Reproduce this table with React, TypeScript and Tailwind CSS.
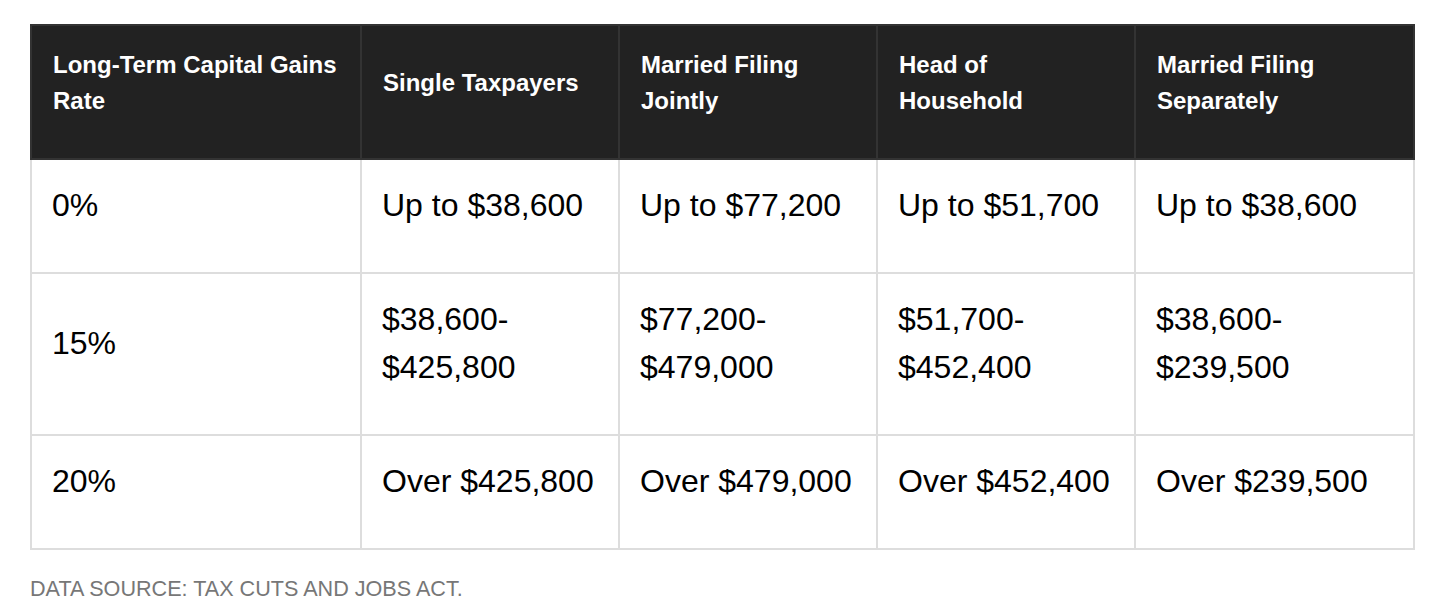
const headers = [
  "Long-Term Capital Gains Rate",
  "Single Taxpayers",
  "Married Filing Jointly",
  "Head of Household",
  "Married Filing Separately",
];

const rows = [
  ["0%", "Up to $38,600", "Up to $77,200", "Up to $51,700", "Up to $38,600"],
  ["15%", "$38,600-$425,800", "$77,200-$479,000", "$51,700-$452,400", "$38,600-$239,500"],
  ["20%", "Over $425,800", "Over $479,000", "Over $452,400", "Over $239,500"],
];

const widths = ["w-[330px]", "w-[258px]", "w-[258px]", "w-[258px]", "w-[279px]"];

function Cell({ text }: { text: string }) {
  // break ranges after the dash like the source
  if (text.includes("-$")) {
    const [a, b] = text.split("-");
    return (
      <>
        {a}-<br />
        {b}
      </>
    );
  }
  return <>{text}</>;
}

export default function App() {
  return (
    <div className="min-h-screen bg-white px-[30px] pt-[24px] font-['Liberation_Sans',Arial,sans-serif]">
      <table className="table-fixed border-collapse w-[1384px]">
        <colgroup>
          {widths.map((w, i) => (
            <col key={i} className={w} />
          ))}
        </colgroup>
        <thead>
          <tr className="bg-[#222222]">
            {headers.map((h, i) => (
              <th
                key={i}
                className="border-2 border-[#333333] pl-[21px] pr-[21px] pt-[21px] pb-[39px] text-left align-middle text-[24px] font-bold leading-[36px] text-white"
              >
                {i === 0 ? (
                  <>
                    Long-Term Capital Gains
                    <br />
                    Rate
                  </>
                ) : (
                  h
                )}
              </th>
            ))}
          </tr>
        </thead>
        <tbody>
          {rows.map((r, ri) => (
            <tr key={ri}>
              {r.map((c, ci) => (
                <td
                  key={ci}
                  className="border-2 border-[#dddddd] px-[20px] pt-[21px] pb-[43px] align-middle text-[32px] leading-[48px] text-black"
                >
                  <Cell text={c} />
                </td>
              ))}
            </tr>
          ))}
        </tbody>
      </table>
      <p className="mt-[25px] text-[21.6px] leading-[28px] text-[#777777]">DATA SOURCE: TAX CUTS AND JOBS ACT.</p>
    </div>
  );
}
